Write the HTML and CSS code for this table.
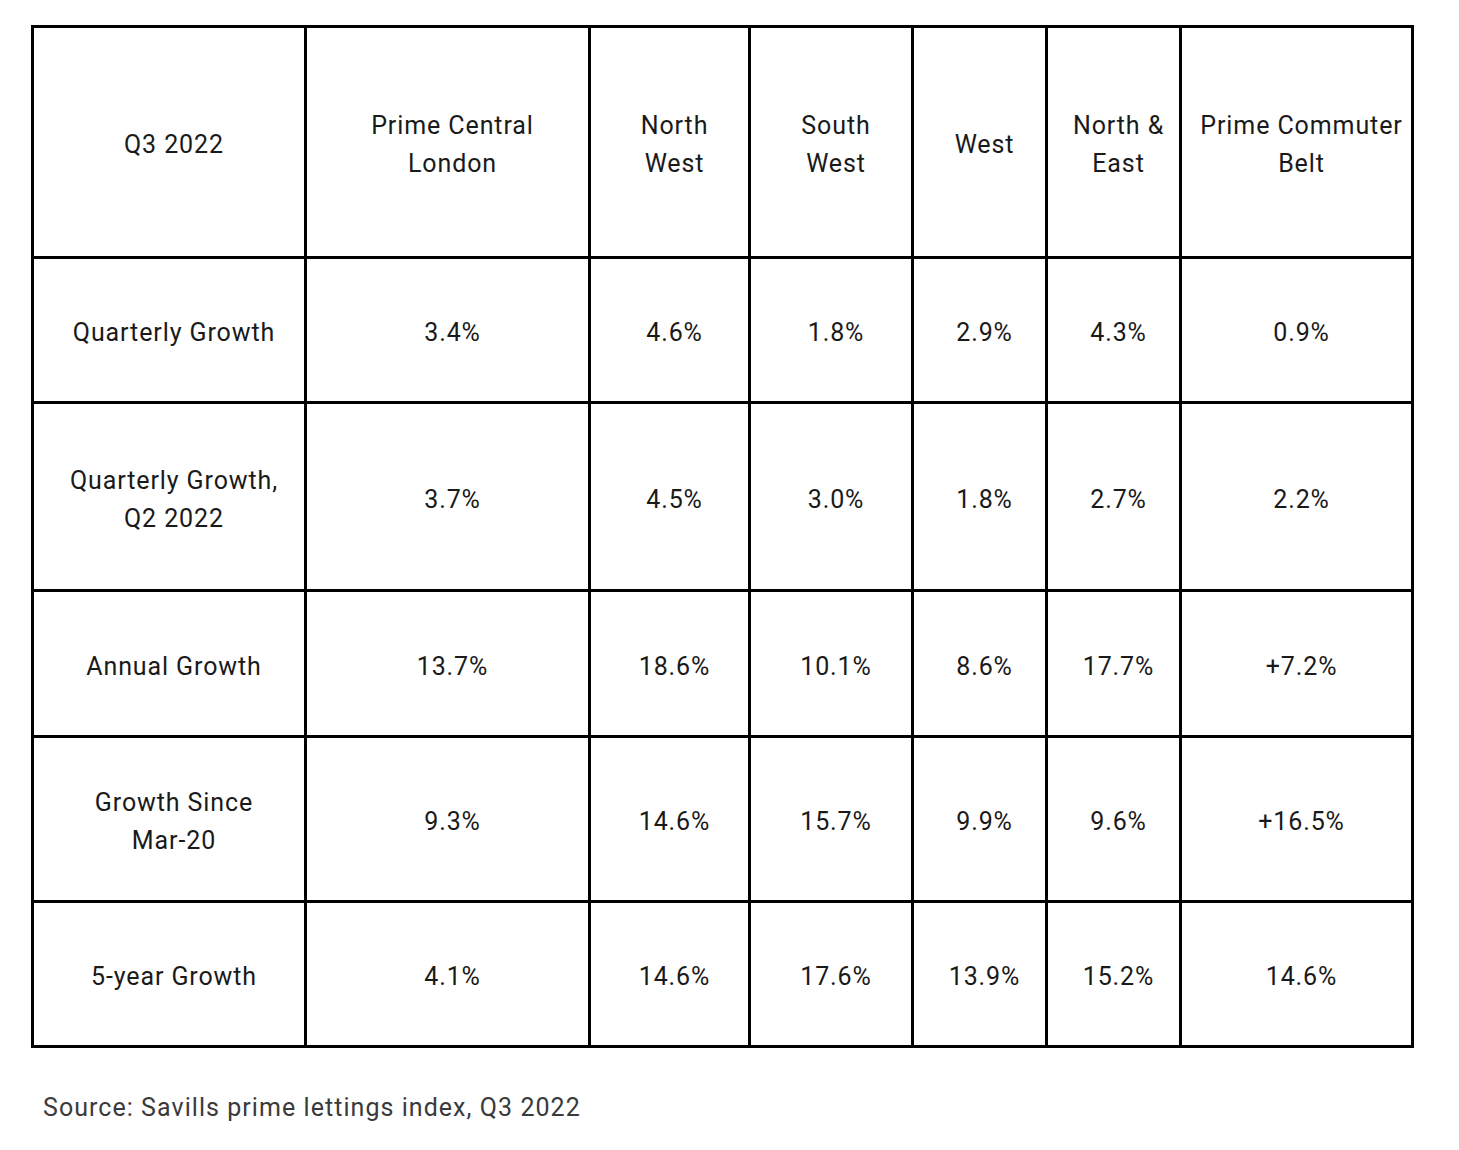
FILE: index.html
```html
<!DOCTYPE html>
<html>
<head>
<meta charset="utf-8">
<link rel="stylesheet" href="styles.css">
</head>
<body>
<div class="page">
<table class="grid">
<colgroup>
<col class="c1"><col class="c2"><col class="c3"><col class="c4"><col class="c5"><col class="c6"><col class="c7">
</colgroup>
<tr class="r-head">
<td>Q3 2022</td>
<td>Prime Central<br>London</td>
<td>North<br>West</td>
<td>South<br>West</td>
<td>West</td>
<td>North &amp;<br>East</td>
<td>Prime Commuter<br>Belt</td>
</tr>
<tr class="r1">
<td>Quarterly Growth</td>
<td>3.4%</td><td>4.6%</td><td>1.8%</td><td>2.9%</td><td>4.3%</td><td>0.9%</td>
</tr>
<tr class="r2">
<td>Quarterly Growth,<br>Q2 2022</td>
<td>3.7%</td><td>4.5%</td><td>3.0%</td><td>1.8%</td><td>2.7%</td><td>2.2%</td>
</tr>
<tr class="r3">
<td>Annual Growth</td>
<td>13.7%</td><td>18.6%</td><td>10.1%</td><td>8.6%</td><td>17.7%</td><td>+7.2%</td>
</tr>
<tr class="r4">
<td>Growth Since<br>Mar-20</td>
<td>9.3%</td><td>14.6%</td><td>15.7%</td><td>9.9%</td><td>9.6%</td><td>+16.5%</td>
</tr>
<tr class="r5">
<td>5-year Growth</td>
<td>4.1%</td><td>14.6%</td><td>17.6%</td><td>13.9%</td><td>15.2%</td><td>14.6%</td>
</tr>
</table>
<p class="source">Source: Savills prime lettings index, Q3 2022</p>
</div>
</body>
</html>
```

FILE: styles.css
```css
html, body {
  margin: 0;
  padding: 0;
  background: #fff;
}
.page {
  padding: 25px 0 0 31px;
  font-family: Roboto, "Liberation Sans", sans-serif;
  color: #1a1a1a;
}
.grid {
  border-collapse: collapse;
  table-layout: fixed;
  width: 1383px;
}
.c1 { width: 273px; }
.c2 { width: 284px; }
.c3 { width: 160px; }
.c4 { width: 163px; }
.c5 { width: 134px; }
.c6 { width: 134px; }
.c7 { width: 232px; }
.grid td {
  border: 3px solid #000;
  text-align: center;
  vertical-align: middle;
  font-size: 25px;
  line-height: 38px;
  font-weight: 400;
  letter-spacing: 0.9px;
  padding: 6px 0 0 10px;
  white-space: nowrap;
}
.r-head { height: 231px; }
.r1 { height: 145px; }
.r2 { height: 188px; }
.r3 { height: 146px; }
.r4 { height: 165px; }
.r5 { height: 145px; }
.source {
  margin: 44px 0 0 12px;
  font-size: 25px;
  font-weight: 400;
  letter-spacing: 1.05px;
  color: #3a3a3a;
  line-height: 32px;
}
```
